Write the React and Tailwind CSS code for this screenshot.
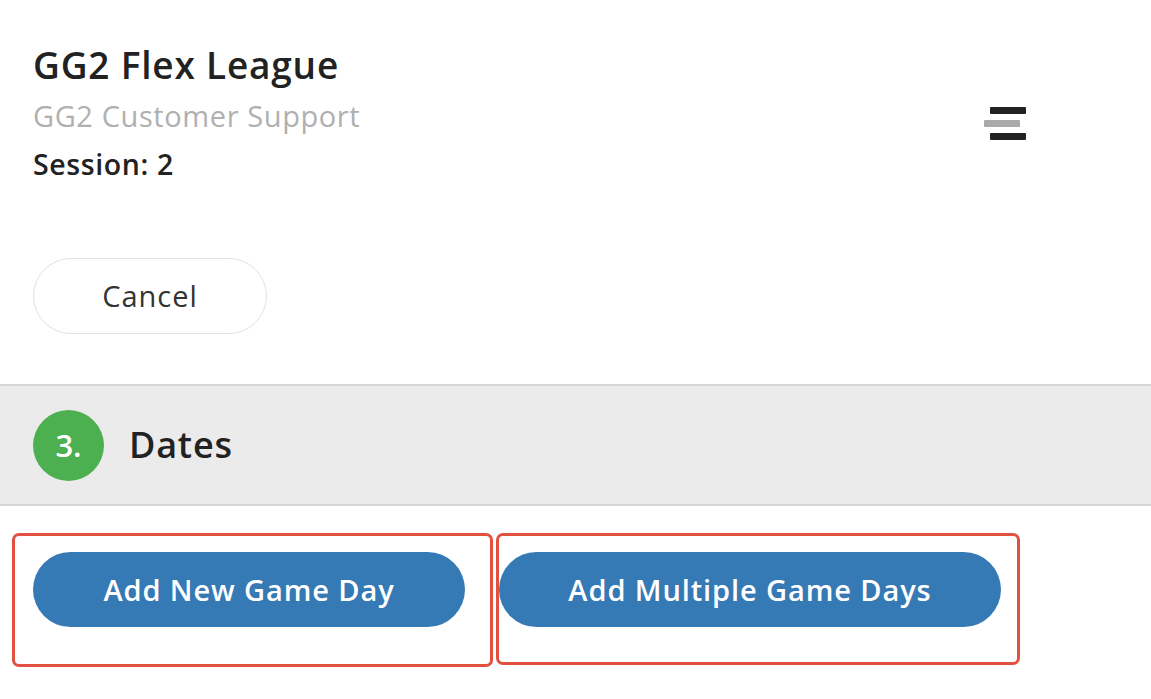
export default function App() {
  return (
    <main
      className="min-h-[699px] w-full bg-white"
      style={{ fontFamily: '"Open Sans", "Noto Sans", sans-serif' }}
    >
      <header className="flex items-start justify-between pl-[33px] pr-[125px] pt-[43px] pb-[50px]">
        <div className="flex flex-col">
          <h1 className="text-[37px] font-semibold leading-[44px] tracking-[0.8px] text-[#222]">GG2 Flex League</h1>
          <p className="mt-[11px] text-[29px] leading-[36px] tracking-[0.6px] text-[#b0b0b0]">GG2 Customer Support</p>
          <p className="mt-[12px] text-[28.5px] font-semibold leading-[36px] tracking-[0.6px] text-[#222]">Session: 2</p>
          <button className="mt-[76px] flex h-[76px] w-[234px] items-center justify-center rounded-full border border-[#e2e2e2] text-[29px] font-medium tracking-[1px] text-[#333]">
            Cancel
          </button>
        </div>
        <div className="mt-[64px] flex flex-col items-end gap-[6px]">
          <span className="h-[7px] w-[36px] rounded-[1px] bg-[#222]" />
          <span className="mr-[6px] h-[7px] w-[36px] rounded-[1px] bg-[#aaa]" />
          <span className="h-[7px] w-[36px] rounded-[1px] bg-[#222]" />
        </div>
      </header>

      <section className="flex h-[122px] items-center gap-[25px] border-y-2 border-[#d6d6d6] bg-[#ebebeb] pl-[33px]">
        <div className="flex h-[71px] w-[71px] items-center justify-center rounded-full bg-[#4caf50] text-[31px] font-semibold text-white">
          3.
        </div>
        <h2 className="text-[36px] font-semibold tracking-[0.8px] text-[#222]">Dates</h2>
      </section>

      <div className="mt-[27px] flex pl-[12px]">
        <div className="h-[134px] w-[481px] rounded-[7px] border-[3px] border-[#e2513f] pl-[18px] pt-[16px]">
          <button className="flex h-[75px] w-[432px] items-center justify-center rounded-full bg-[#3579b5] text-[29px] font-semibold tracking-[0.9px] text-white">
            Add New Game Day
          </button>
        </div>
        <div className="ml-[3px] h-[132px] w-[524px] rounded-[7px] border-[3px] border-[#e2513f] pt-[16px]">
          <button className="flex h-[75px] w-[502px] items-center justify-center rounded-full bg-[#3579b5] text-[29px] font-semibold tracking-[0.9px] text-white">
            Add Multiple Game Days
          </button>
        </div>
      </div>
    </main>
  );
}
